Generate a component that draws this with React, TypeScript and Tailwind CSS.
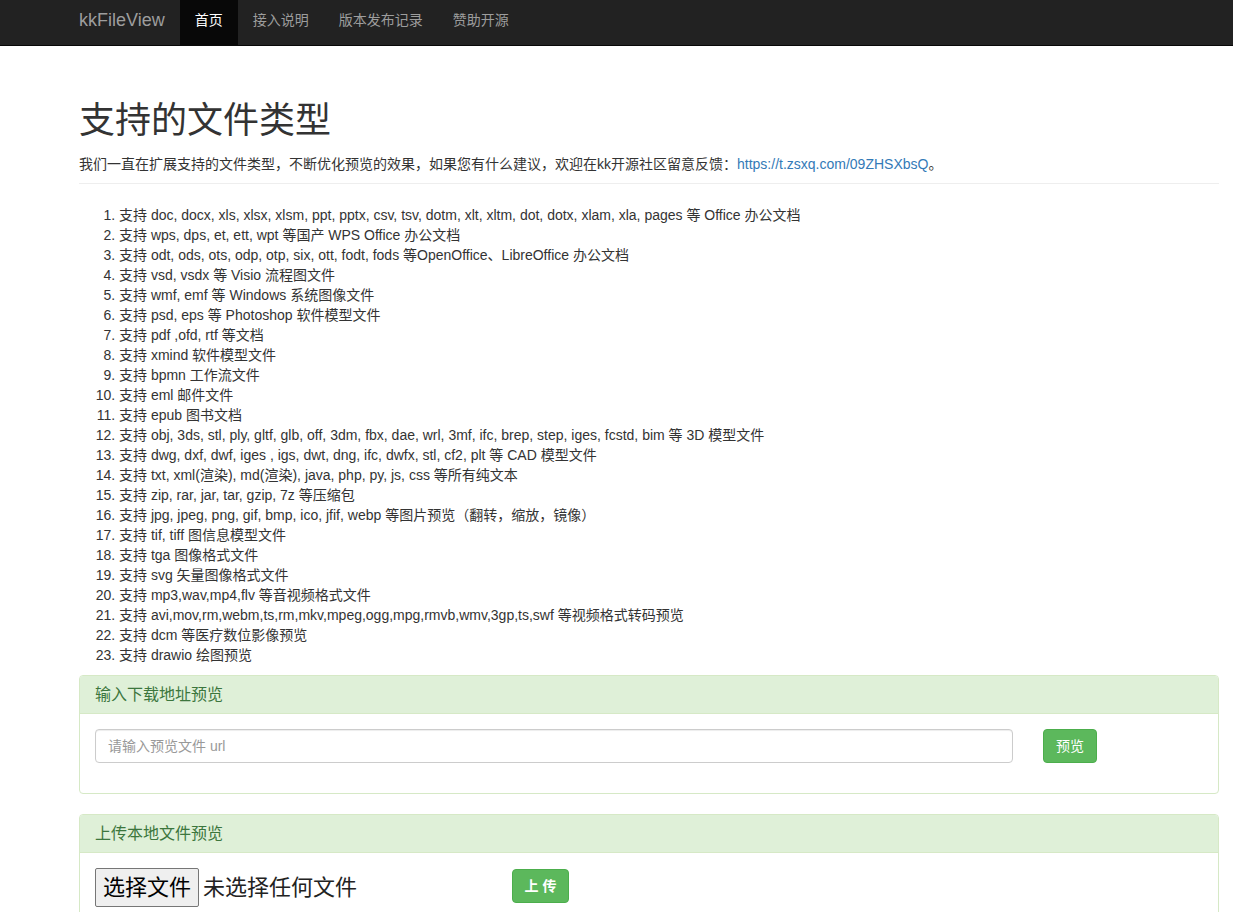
import React from "react";

const items: string[] = [
  "支持 doc, docx, xls, xlsx, xlsm, ppt, pptx, csv, tsv, dotm, xlt, xltm, dot, dotx, xlam, xla, pages 等 Office 办公文档",
  "支持 wps, dps, et, ett, wpt 等国产 WPS Office 办公文档",
  "支持 odt, ods, ots, odp, otp, six, ott, fodt, fods 等OpenOffice、LibreOffice 办公文档",
  "支持 vsd, vsdx 等 Visio 流程图文件",
  "支持 wmf, emf 等 Windows 系统图像文件",
  "支持 psd, eps 等 Photoshop 软件模型文件",
  "支持 pdf ,ofd, rtf 等文档",
  "支持 xmind 软件模型文件",
  "支持 bpmn 工作流文件",
  "支持 eml 邮件文件",
  "支持 epub 图书文档",
  "支持 obj, 3ds, stl, ply, gltf, glb, off, 3dm, fbx, dae, wrl, 3mf, ifc, brep, step, iges, fcstd, bim 等 3D 模型文件",
  "支持 dwg, dxf, dwf, iges , igs, dwt, dng, ifc, dwfx, stl, cf2, plt 等 CAD 模型文件",
  "支持 txt, xml(渲染), md(渲染), java, php, py, js, css 等所有纯文本",
  "支持 zip, rar, jar, tar, gzip, 7z 等压缩包",
  "支持 jpg, jpeg, png, gif, bmp, ico, jfif, webp 等图片预览（翻转，缩放，镜像）",
  "支持 tif, tiff 图信息模型文件",
  "支持 tga 图像格式文件",
  "支持 svg 矢量图像格式文件",
  "支持 mp3,wav,mp4,flv 等音视频格式文件",
  "支持 avi,mov,rm,webm,ts,rm,mkv,mpeg,ogg,mpg,rmvb,wmv,3gp,ts,swf 等视频格式转码预览",
  "支持 dcm 等医疗数位影像预览",
  "支持 drawio 绘图预览",
];

const navLinks = ["接入说明", "版本发布记录", "赞助开源"];

const Navbar: React.FC = () => (
  <div className="h-[46px] bg-[#222] border-b border-[#080808] flex pl-[64px]">
    <div className="px-[15px] text-[18px] leading-[40px] text-[#9d9d9d]">kkFileView</div>
    <div className="px-[15px] text-[14px] leading-[40px] text-white bg-[#080808]">首页</div>
    {navLinks.map((l) => (
      <div key={l} className="px-[15px] text-[14px] leading-[40px] text-[#9d9d9d]">
        {l}
      </div>
    ))}
  </div>
);

const Panel: React.FC<{ title: string; children: React.ReactNode; className?: string }> = ({
  title,
  children,
  className,
}) => (
  <div className={`border border-[#d6e9c6] rounded-[4px] ${className ?? ""}`}>
    <div className="bg-[#dff0d8] text-[#3c763d] px-[15px] py-[10px] border-b border-[#d6e9c6] rounded-t-[3px] text-[16px] leading-[17px]">
      {title}
    </div>
    {children}
  </div>
);

export default function App() {
  return (
    <div
      className="min-h-screen bg-white text-[#333] text-[14px]"
      style={{ fontFamily: '"Liberation Sans", "Noto Sans CJK SC", sans-serif' }}
    >
      <Navbar />
      <div className="ml-[79px] w-[1140px]">
        {/* page header */}
        <div className="mt-[55px] pb-[9px] border-b border-[#eee]">
          <h1 className="text-[36px] leading-[40px] mb-[13px]">支持的文件类型</h1>
          <p className="leading-[20px]">
            我们一直在扩展支持的文件类型，不断优化预览的效果，如果您有什么建议，欢迎在kk开源社区留意反馈：
            <a className="text-[#337ab7]">https://t.zsxq.com/09ZHSXbsQ</a>。
          </p>
        </div>

        <ol className="list-decimal pl-[40px] mt-[21px] leading-[20px]">
          {items.map((t, i) => (
            <li key={i}>{t}</li>
          ))}
        </ol>

        <Panel title="输入下载地址预览" className="mt-[10px]">
          <div className="px-[15px] pt-[15px] pb-[30px] flex items-center">
            <input
              className="w-[918px] h-[34px] border border-[#ccc] rounded-[4px] px-[12px] text-[14px] placeholder:text-[#999] outline-none shadow-[inset_0_1px_1px_rgba(0,0,0,0.075)]"
              placeholder="请输入预览文件 url"
            />
            <button className="ml-[30px] w-[54px] h-[34px] bg-[#5cb85c] border border-[#4cae4c] rounded-[4px] text-white text-[14px]">
              预览
            </button>
          </div>
        </Panel>

        <Panel title="上传本地文件预览" className="mt-[20px]">
          <div className="px-[15px] pt-[15px] pb-[15px] flex items-start">
            <div className="w-[417px] flex items-center">
              <button className="h-[39px] px-[7px] bg-[#efefef] border border-[#767676] rounded-[2px] text-[22px] leading-[28px] text-black">
                选择文件
              </button>
              <span className="ml-[4px] text-[22px] leading-[28px] text-[#222]">未选择任何文件</span>
            </div>
            <button className="mt-[1px] w-[57px] h-[34px] bg-[#5cb85c] border border-[#4cae4c] rounded-[4px] text-white text-[14px] font-bold">
              上 传
            </button>
          </div>
        </Panel>
      </div>
    </div>
  );
}
